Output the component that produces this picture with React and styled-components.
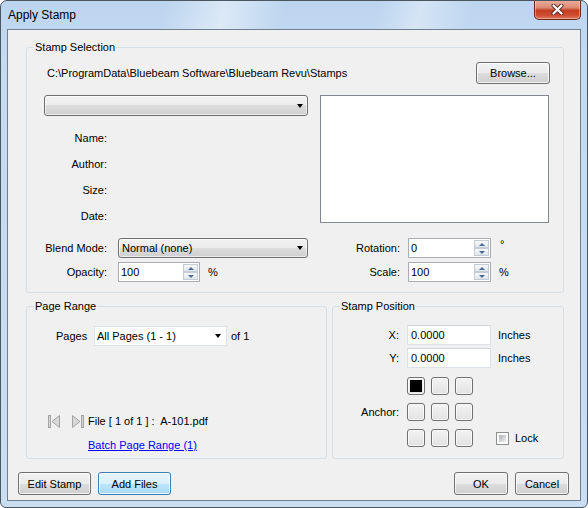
import React from 'react'
import styled, { createGlobalStyle } from 'styled-components'

const GlobalStyle = createGlobalStyle`
  html, body {
    margin: 0;
    padding: 0;
    background: #fff;
  }
  body {
    font-family: "Liberation Sans", Arial, sans-serif;
    font-size: 11px;
    color: #000;
  }
  * { box-sizing: border-box; }
`

const Window = styled.div`
  width: 588px;
  height: 508px;
  border: 1px solid #4b5663;
  border-radius: 7px 7px 6px 6px;
  padding: 0 6px 6px;
  display: flex;
  flex-direction: column;
  overflow: hidden;
  background:
    linear-gradient(105deg, rgba(255,255,255,0) 28%, rgba(255,255,255,0.45) 38%, rgba(255,255,255,0) 48%, rgba(255,255,255,0) 64%, rgba(255,255,255,0.35) 71%, rgba(255,255,255,0) 80%) top / 100% 29px no-repeat,
    linear-gradient(#bcd5ef, #c4daf1 60px, #cadef2);
`

const TitleBar = styled.div`
  height: 28px;
  display: flex;
  align-items: flex-start;
  justify-content: space-between;
  flex-shrink: 0;
`

const Title = styled.div`
  font-size: 12px;
  line-height: 14px;
  margin: 7px 0 0 1px;
`

const CloseButton = styled.div`
  width: 47px;
  height: 20px;
  margin-top: -1px;
  border: 1px solid #6b2a20;
  border-top: none;
  border-radius: 0 0 5px 5px;
  background: linear-gradient(#eab0a2, #dc8a74 40%, #c53d22 55%, #cf4d33 80%, #e0775b);
  box-shadow: inset 0 0 0 1px rgba(255,255,255,0.35);
  display: flex;
  align-items: center;
  justify-content: center;
`

const Client = styled.div`
  flex: 1;
  background: #f0f0f0;
  border: 1px solid #6f7f90;
  display: flex;
  flex-direction: column;
  padding-top: 10px;
`

const Group = styled.fieldset`
  margin: 0;
  padding: 0;
  min-width: 0;
  width: ${p => p.$w}px;
  height: ${p => p.$h}px;
  border: 1px solid #d5dfe5;
  border-radius: 3px;
  display: flex;
  flex-direction: column;
`

const Legend = styled.legend`
  margin-left: 7px;
  padding: 0 1px;
  line-height: 14px;
`

const PathRow = styled.div`
  margin-top: 8px;
  height: 22px;
  padding: 0 13px 0 20px;
  display: flex;
  align-items: center;
  justify-content: space-between;
`

const Button = styled.button`
  width: ${p => p.$w}px;
  height: ${p => p.$h || 23}px;
  padding: 0;
  font: inherit;
  color: #000;
  border: 1px solid ${p => (p.$focus ? '#3c7fb1' : '#707070')};
  border-radius: 3px;
  background: ${p =>
    p.$focus
      ? 'linear-gradient(#eaf6fd 0%, #d9f0fc 50%, #bee6fd 50%, #a7d9f5 100%)'
      : 'linear-gradient(#f2f2f2 0%, #ebebeb 50%, #dddddd 50%, #cfcfcf 100%)'};
  box-shadow: inset 0 0 0 1px rgba(255,255,255,0.75);
`

const MainGrid = styled.div`
  margin-top: 11px;
  padding-left: 17px;
  display: grid;
  grid-template-columns: 264px 229px;
  grid-template-rows: 143px auto;
  column-gap: 12px;
`

const Combo = styled.div`
  width: ${p => p.$w}px;
  height: ${p => p.$h}px;
  border: 1px solid #707070;
  border-radius: 3px;
  background: linear-gradient(#f2f2f2 0%, #ebebeb 50%, #dddddd 50%, #cfcfcf 100%);
  box-shadow: inset 0 0 0 1px rgba(255,255,255,0.6);
  padding: 0 4px 0 3px;
  display: flex;
  align-items: center;
  justify-content: space-between;
`

const FlatCombo = styled.div`
  width: ${p => p.$w}px;
  height: 20px;
  background: #fff;
  border: 1px solid #dde2e8;
  padding: 0 5px 0 2px;
  display: flex;
  align-items: center;
  justify-content: space-between;
`

const Arrow = styled.span`
  width: 0;
  height: 0;
  border-left: 3.5px solid transparent;
  border-right: 3.5px solid transparent;
  border-top: 4px solid #000;
`

const InfoList = styled.div`
  margin-top: 9px;
`

const InfoRow = styled.div`
  height: 26px;
  width: 63px;
  text-align: right;
  line-height: 26px;
`

const Preview = styled.div`
  height: 128px;
  background: #fff;
  border: 1px solid #828790;
`

const FieldStack = styled.div`
  display: flex;
  flex-direction: column;
  gap: 4px;
`

const FieldRow = styled.div`
  display: flex;
  align-items: center;
  height: 20px;
`

const FieldLabel = styled.span`
  width: ${p => p.$w}px;
  margin-right: ${p => p.$gap}px;
  text-align: right;
  flex-shrink: 0;
`

const Unit = styled.span`
  margin-left: ${p => p.$ml || 8}px;
  align-self: ${p => (p.$top ? 'flex-start' : 'center')};
`

const SpinBox = styled.div`
  width: ${p => p.$w}px;
  height: 20px;
  background: #fff;
  border: 1px solid #abadb3;
  display: flex;
  align-items: center;
  padding: 1px;
`

const SpinValue = styled.span`
  flex: 1;
  padding-left: 1px;
`

const SpinButtons = styled.div`
  width: 15px;
  height: 16px;
  display: flex;
  flex-direction: column;
  gap: 0;
`

const SpinBtn = styled.div`
  flex: 1;
  border: 1px solid #c4ccd6;
  background: linear-gradient(#f7f8fa, #e1e6ec);
  display: flex;
  align-items: center;
  justify-content: center;
`

const Tri = styled.span`
  width: 0;
  height: 0;
  border-left: 3px solid transparent;
  border-right: 3px solid transparent;
  ${p => (p.$up ? 'border-bottom: 3px solid #4e6a92;' : 'border-top: 3px solid #4e6a92;')}
`

const BottomGroups = styled.div`
  margin: 6px 0 0 18px;
  display: flex;
  gap: 5px;
`

const PagesRow = styled.div`
  margin-top: 13px;
  padding-left: 29px;
  display: flex;
  align-items: center;
`

const FileRow = styled.div`
  margin-top: 68px;
  padding-left: 21px;
  height: 14px;
  display: flex;
  align-items: center;
  gap: 0;
`

const NavIcon = styled.svg`
  margin-right: ${p => p.$mr}px;
`

const BatchLink = styled.a`
  margin: 10px 0 0 61px;
  color: #0000ff;
  text-decoration: underline;
  line-height: 14px;
  align-self: flex-start;
  cursor: pointer;
`

const PositionBody = styled.div`
  margin-top: 12px;
  display: flex;
  flex-direction: column;
  gap: 3px;
`

const TextBox = styled.div`
  width: 84px;
  height: 20px;
  background: #fff;
  border: 1px solid #dde2e8;
  border-top-color: #d0d5db;
  padding-left: 3px;
  display: flex;
  align-items: center;
`

const AnchorRow = styled.div`
  margin-top: 6px;
  display: flex;
  align-items: center;
`

const AnchorGrid = styled.div`
  display: grid;
  grid-template-columns: repeat(3, 18px);
  grid-template-rows: repeat(3, 18px);
  column-gap: 6px;
  row-gap: 8px;
`

const AnchorCell = styled.div`
  border: 1px solid #707070;
  border-radius: 3px;
  background: linear-gradient(#f3f3f3, #e2e2e2);
  box-shadow: inset 0 0 0 1px rgba(255,255,255,0.7);
  padding: 2px;
  display: flex;
`

const AnchorMark = styled.div`
  flex: 1;
  background: #000;
`

const LockWrap = styled.label`
  align-self: flex-end;
  height: 18px;
  margin-left: 23px;
  display: flex;
  align-items: center;
  gap: 6px;
`

const CheckBox = styled.span`
  width: 13px;
  height: 13px;
  border: 1px solid #8e8f8f;
  background: #fff;
  padding: 2px;
  display: flex;
`

const CheckInner = styled.span`
  flex: 1;
  background: linear-gradient(135deg, #adb2b8, #f0f0f1);
`

const ButtonBar = styled.div`
  margin-top: 13px;
  padding: 0 11px 0 10px;
  display: flex;
  gap: 7px;
`

const Spacer = styled.div`
  flex: 1;
`

function Spin({ w, value }) {
  return (
    <SpinBox $w={w}>
      <SpinValue>{value}</SpinValue>
      <SpinButtons>
        <SpinBtn><Tri $up /></SpinBtn>
        <SpinBtn><Tri /></SpinBtn>
      </SpinButtons>
    </SpinBox>
  )
}

export default function App() {
  const cells = Array.from({ length: 9 }, (_, i) => i)
  return (
    <>
      <GlobalStyle />
      <Window>
        <TitleBar>
          <Title>Apply Stamp</Title>
          <CloseButton>
            <svg width="13" height="11" viewBox="0 0 13 11">
              <path d="M2.5 1.5 L10.5 9.5 M10.5 1.5 L2.5 9.5" stroke="#5a2a22" strokeWidth="4" strokeLinecap="round" />
              <path d="M2.5 1.5 L10.5 9.5 M10.5 1.5 L2.5 9.5" stroke="#fff" strokeWidth="2.2" strokeLinecap="round" />
            </svg>
          </CloseButton>
        </TitleBar>
        <Client>
          <Group $w={538} $h={253} style={{ marginLeft: 18 }}>
            <Legend>Stamp Selection</Legend>
            <PathRow>
              <span>C:\ProgramData\Bluebeam Software\Bluebeam Revu\Stamps</span>
              <Button $w={74} $h={22}>Browse...</Button>
            </PathRow>
            <MainGrid>
              <div>
                <Combo $w={264} $h={21}>
                  <span />
                  <Arrow />
                </Combo>
                <InfoList>
                  <InfoRow>Name:</InfoRow>
                  <InfoRow>Author:</InfoRow>
                  <InfoRow>Size:</InfoRow>
                  <InfoRow>Date:</InfoRow>
                </InfoList>
              </div>
              <Preview />
              <FieldStack>
                <FieldRow>
                  <FieldLabel $w={63} $gap={11}>Blend Mode:</FieldLabel>
                  <Combo $w={190} $h={20}>
                    <span>Normal (none)</span>
                    <Arrow />
                  </Combo>
                </FieldRow>
                <FieldRow>
                  <FieldLabel $w={63} $gap={11}>Opacity:</FieldLabel>
                  <Spin w={82} value="100" />
                  <Unit>%</Unit>
                </FieldRow>
              </FieldStack>
              <FieldStack>
                <FieldRow>
                  <FieldLabel $w={80} $gap={8}>Rotation:</FieldLabel>
                  <Spin w={83} value="0" />
                  <Unit $ml={9} $top>°</Unit>
                </FieldRow>
                <FieldRow>
                  <FieldLabel $w={80} $gap={8}>Scale:</FieldLabel>
                  <Spin w={83} value="100" />
                  <Unit>%</Unit>
                </FieldRow>
              </FieldStack>
            </MainGrid>
          </Group>

          <BottomGroups>
            <Group $w={301} $h={160}>
              <Legend>Page Range</Legend>
              <PagesRow>
                <FieldLabel $w={31} $gap={7} style={{ textAlign: 'left' }}>Pages</FieldLabel>
                <FlatCombo $w={133}>
                  <span>All Pages (1 - 1)</span>
                  <Arrow />
                </FlatCombo>
                <Unit $ml={4}>of 1</Unit>
              </PagesRow>
              <FileRow>
                <NavIcon $mr={12} width="12" height="13" viewBox="0 0 12 13">
                  <rect x="0.5" y="0.5" width="2" height="12" fill="#d8d8d8" stroke="#a3a3a3" />
                  <path d="M11.5 0.5 L4 6.5 L11.5 12.5 Z" fill="#d8d8d8" stroke="#a3a3a3" />
                </NavIcon>
                <NavIcon $mr={4} width="12" height="13" viewBox="0 0 12 13">
                  <path d="M0.5 0.5 L8 6.5 L0.5 12.5 Z" fill="#d8d8d8" stroke="#a3a3a3" />
                  <rect x="9.5" y="0.5" width="2" height="12" fill="#d8d8d8" stroke="#a3a3a3" />
                </NavIcon>
                <span>File [ 1 of 1 ] :&nbsp; A-101.pdf</span>
              </FileRow>
              <BatchLink>Batch Page Range (1)</BatchLink>
            </Group>

            <Group $w={232} $h={160}>
              <Legend>Stamp Position</Legend>
              <PositionBody>
                <FieldRow>
                  <FieldLabel $w={66} $gap={8}>X:</FieldLabel>
                  <TextBox>0.0000</TextBox>
                  <Unit $ml={7}>Inches</Unit>
                </FieldRow>
                <FieldRow>
                  <FieldLabel $w={66} $gap={8}>Y:</FieldLabel>
                  <TextBox>0.0000</TextBox>
                  <Unit $ml={7}>Inches</Unit>
                </FieldRow>
                <AnchorRow>
                  <FieldLabel $w={66} $gap={8}>Anchor:</FieldLabel>
                  <AnchorGrid>
                    {cells.map(i => (
                      <AnchorCell key={i}>{i === 0 && <AnchorMark />}</AnchorCell>
                    ))}
                  </AnchorGrid>
                  <LockWrap>
                    <CheckBox><CheckInner /></CheckBox>
                    <span>Lock</span>
                  </LockWrap>
                </AnchorRow>
              </PositionBody>
            </Group>
          </BottomGroups>

          <ButtonBar>
            <Button $w={73}>Edit Stamp</Button>
            <Button $w={73} $focus>Add Files</Button>
            <Spacer />
            <Button $w={54}>OK</Button>
            <Button $w={54}>Cancel</Button>
          </ButtonBar>
        </Client>
      </Window>
    </>
  )
}
